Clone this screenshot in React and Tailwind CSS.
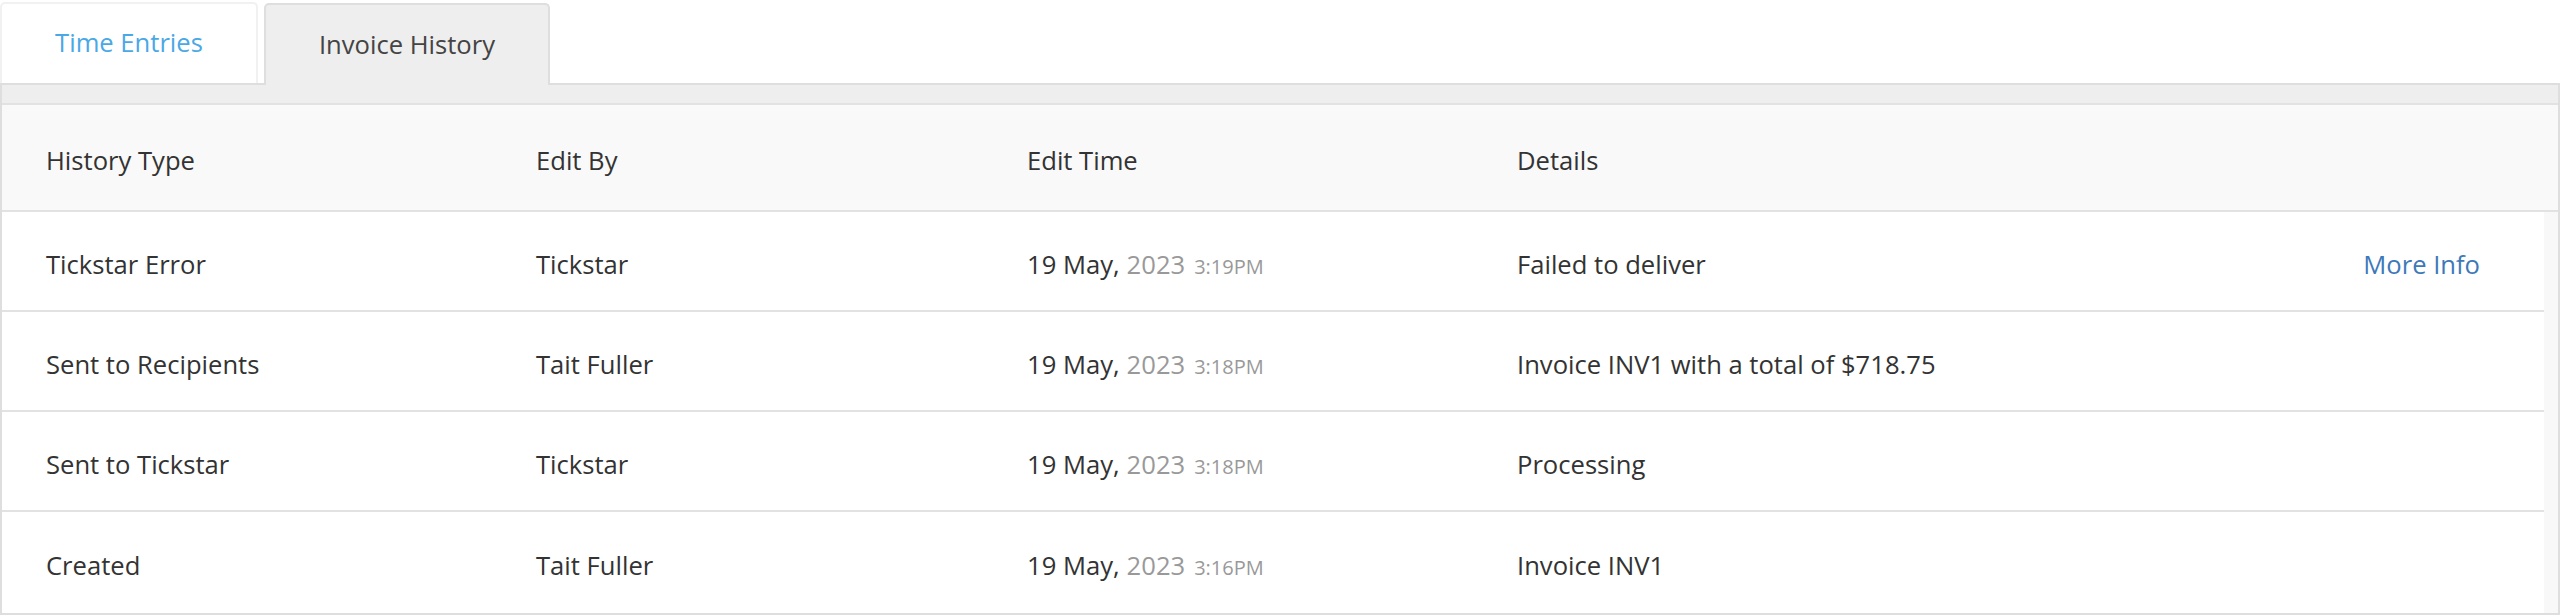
import React from 'react';

const rows = [
  { type: 'Tickstar Error', by: 'Tickstar', date: '19 May,', year: '2023', time: '3:19PM', details: 'Failed to deliver', more: true },
  { type: 'Sent to Recipients', by: 'Tait Fuller', date: '19 May,', year: '2023', time: '3:18PM', details: 'Invoice INV1 with a total of $718.75' },
  { type: 'Sent to Tickstar', by: 'Tickstar', date: '19 May,', year: '2023', time: '3:18PM', details: 'Processing' },
  { type: 'Created', by: 'Tait Fuller', date: '19 May,', year: '2023', time: '3:16PM', details: 'Invoice INV1' },
];

const cols = 'grid grid-cols-[490px_491px_490px_1fr] items-center';

export default function App() {
  return (
    <div className="w-[2560px] h-[615px] bg-white text-[#333] text-[25.6px]" style={{ fontFamily: '"Open Sans", "Noto Sans", sans-serif' }}>
      <div className="flex items-end h-[83px] pt-[2px]">
        <button className="w-[258px] h-full border-2 border-b-0 border-[#f1f1f1] rounded-t-[5px] bg-white text-[#4aa8e6]">
          Time Entries
        </button>
        <button className="ml-[6px] w-[286px] h-[82px] border-2 border-b-0 border-[#dedede] rounded-t-[5px] bg-[#eeeeee] text-[#444] relative z-10 -mb-[2px]">
          Invoice History
        </button>
      </div>

      <div className="border-2 border-[#dedede] h-[532px] bg-[#f8f8f8] flex flex-col">
        <div className="h-[20px] bg-[#eeeeee] border-b-2 border-[#e2e2e2]" />
        <div className={`${cols} h-[107px] shrink-0 bg-[#f9f9f9] border-b-2 border-[#e2e2e2] pl-[44px] pt-[8px]`}>
          <div>History Type</div>
          <div>Edit By</div>
          <div>Edit Time</div>
          <div>Details</div>
        </div>
        {rows.map((r, i) => (
          <div
            key={r.type}
            className={`${cols} ${i < rows.length - 1 ? 'h-[100px] border-b-2 border-[#e2e2e2]' : 'flex-1'} shrink-0 bg-white mr-[14px] pl-[44px] pr-[64px] pt-[8px]`}
          >
            <div>{r.type}</div>
            <div>{r.by}</div>
            <div className="flex items-baseline">
              <span>{r.date}</span>
              <span className="ml-[7px] text-[#999]">{r.year}</span>
              <span className="ml-[9px] text-[20px] text-[#999]">{r.time}</span>
            </div>
            <div className="flex justify-between">
              <span>{r.details}</span>
              {r.more && <a className="text-[#3d79b9] cursor-pointer">More Info</a>}
            </div>
          </div>
        ))}
      </div>
    </div>
  );
}
